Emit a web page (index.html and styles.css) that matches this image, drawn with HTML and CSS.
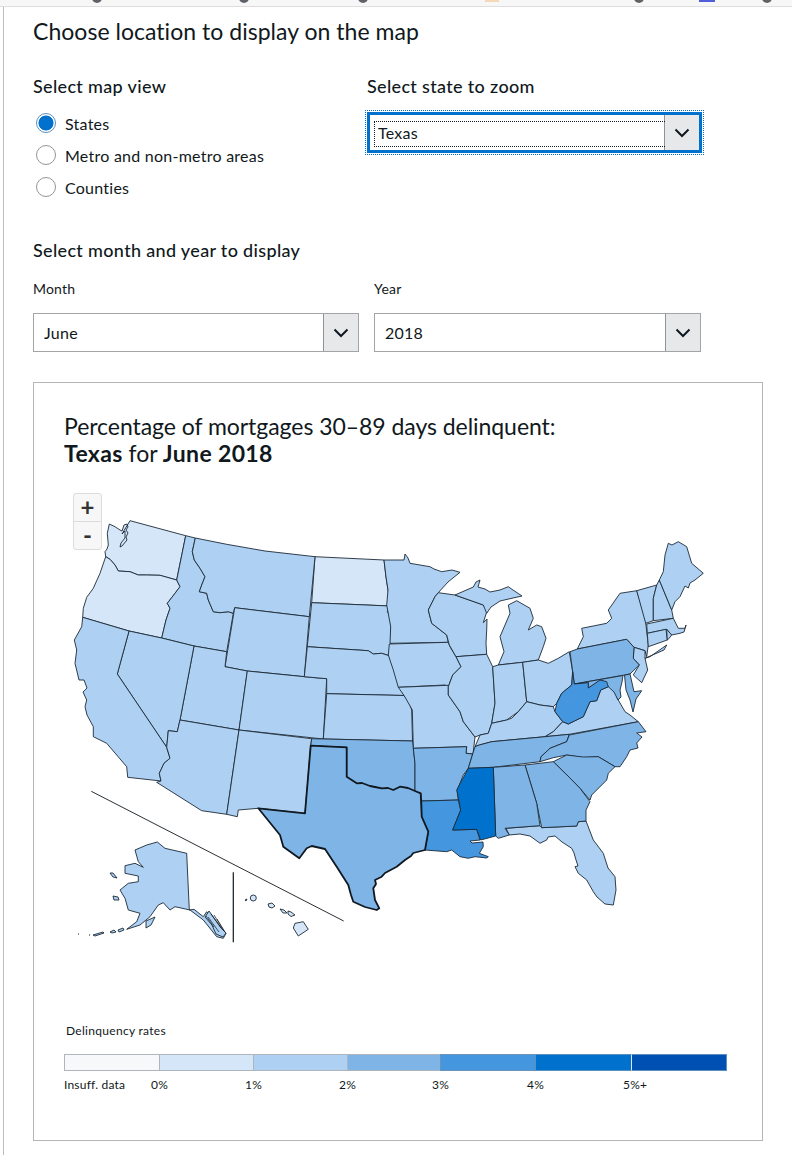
FILE: index.html
```html
<!DOCTYPE html>
<html lang="en">
<head>
<meta charset="utf-8">
<title>Mortgage delinquency map</title>
<link rel="stylesheet" href="styles.css">
</head>
<body>
<div class="topstrip">
  <svg class="topstrip-art" width="792" height="6" viewBox="0 0 792 6" aria-hidden="true">
    <circle cx="97" cy="-2" r="5" fill="#5f6368"/><circle cx="244" cy="-2" r="5" fill="#5f6368"/><circle cx="363" cy="-2" r="5" fill="#5f6368"/>
    <rect x="485" y="0" width="14" height="2" fill="#f6d8b8"/><circle cx="639" cy="-2" r="5" fill="#5f6368"/>
    <rect x="699" y="0" width="16" height="2" fill="#4f5fd8"/><circle cx="767" cy="-2" r="5" fill="#5f6368"/>
  </svg>
</div>
<main class="page">
  <h1 class="page-title">Choose location to display on the map</h1>
  <div class="two-col">
    <section class="col-view">
      <h2 class="group-title">Select map view</h2>
      <div class="radio-list">
        <label class="radio-row"><input type="radio" name="view" checked><span>States</span></label>
        <label class="radio-row"><input type="radio" name="view"><span>Metro and non-metro areas</span></label>
        <label class="radio-row"><input type="radio" name="view"><span>Counties</span></label>
      </div>
    </section>
    <section class="col-state">
      <h2 class="group-title">Select state to zoom</h2>
      <div class="select select-focused">
        <select aria-label="State"><option>Texas</option></select>
        <span class="select-arrow"><svg width="16" height="10" viewBox="0 0 16 10"><path d="M1.5 1.5 8 8l6.5-6.5" fill="none" stroke="#101820" stroke-width="2"/></svg></span>
      </div>
    </section>
  </div>
  <h2 class="group-title date-title">Select month and year to display</h2>
  <div class="date-row">
    <div class="date-field date-month">
      <label class="field-label">Month</label>
      <div class="select">
        <select aria-label="Month"><option>June</option></select>
        <span class="select-arrow"><svg width="16" height="10" viewBox="0 0 16 10"><path d="M1.5 1.5 8 8l6.5-6.5" fill="none" stroke="#101820" stroke-width="2"/></svg></span>
      </div>
    </div>
    <div class="date-field date-year">
      <label class="field-label">Year</label>
      <div class="select">
        <select aria-label="Year"><option>2018</option></select>
        <span class="select-arrow"><svg width="16" height="10" viewBox="0 0 16 10"><path d="M1.5 1.5 8 8l6.5-6.5" fill="none" stroke="#101820" stroke-width="2"/></svg></span>
      </div>
    </div>
  </div>
  <section class="card">
    <h3 class="card-title">Percentage of mortgages 30–89 days delinquent:<br><b>Texas</b> for <b>June 2018</b></h3>
    <div class="map-wrap">
      <div class="zoom-ctl"><button>+</button><button>-</button></div>
      <svg class="map" width="663" height="480" viewBox="64 480 663 480" role="img" aria-label="Map of US states">
        <g class="r1">
          <path d="M130 520.7 185.7 535.7 176.7 580 160 575.3 146.7 575 138.3 575 130 571.7 118.3 571 115 565 110 559.3 105.7 556.7 105 551.7 107 549 108.3 545 107.3 533.3 109.3 524 115 526.7 120 530 122 531 124 525 127 524 128 527 126 530 128 533 126 537 127 540 122 546 120 547 121 543 125 538 125 531 122 534 Z"/>
          <path d="M105.7 556.700 100 573.300 93.300 588.300 86.700 597.300 83.300 608.300 82.700 617.300 129 631 161.700 638 166 620 170 608.300 167.300 603.300 175 593.300 180 586.700 176.700 580 160 575.300 146.700 575 138.300 575 130 571.700 118.300 571 115 565 110 559.300 Z"/>
          <path d="M315 556.700 384 560 386 577 388 590 390 606 311.700 602.700 Z"/>
          <path d="M295 923.300 303.300 921.700 308.300 929.300 298.300 936 293.300 928 Z"/>
          <path d="M288 911 291 912 295 915 291 916.500 288 914 Z"/>
          <path d="M268 904 272 903 275 906 272 908 269 907 Z"/>
          <path d="M280 909 284 910 287 913 283 913 Z"/>
          <circle cx="253.300" cy="898" r="3"/>
          <path d="M245 900 247 899 246 901 Z"/>
        </g>
        <g class="r2">
          <path d="M185.700 535.700 195.300 538 192.300 551.700 194.300 560 200 568.300 205 576.700 201.700 585 199.300 591.700 206.700 593.300 208.300 600 213.300 611.700 220 612.700 228.300 611.700 233.300 613.300 226.700 651.700 194 646 161.700 638 166 620 170 608.300 167.300 603.300 175 593.300 180 586.700 176.700 580 Z"/>
          <path d="M195.300 538 226.700 544.300 265 551 315 556.700 309.300 616.700 234.700 607.700 233.300 613.300 228.300 611.700 220 612.700 213.300 611.700 208.300 600 206.700 593.300 199.300 591.700 201.700 585 205 576.700 200 568.300 194.300 560 192.300 551.700 Z"/>
          <path d="M234.700 607.700 309.300 616.700 304.300 676.700 247.300 671 225 666.700 Z"/>
          <path d="M194 646 226.700 651.700 225 666.700 247.300 671 239 730 180 720 Z"/>
          <path d="M247.300 671 304.300 676.700 326.700 678.700 323.300 739 239 730 Z"/>
          <path d="M129 631 161.700 638 194 646 180 720 177.300 731.700 168.300 730.700 166.700 747.300 117.300 674 Z"/>
          <path d="M82.700 617.300 129 631 117.300 674 166.700 747.300 170 758.300 164 763.300 159.300 773.300 161 781 127.700 777.300 126.700 766.700 116.700 755 106.700 743.300 93.300 736.700 93.300 726.700 87 715 85 706.700 86.700 700 83 692 87 688 84 680 79 680 75 663.300 76.700 650 74.300 640 81.700 626.700 Z"/>
          <path d="M180 720 239 730 226.700 814.300 201.700 810.700 156.700 782.300 161 781 159.300 773.300 164 763.300 170 758.300 166.700 747.300 168.300 730.700 177.300 731.700 Z"/>
          <path d="M239 730 311.700 738.700 310.700 745.700 305 813.300 258.300 808.300 238.300 810 237.300 816.700 226.700 814.300 Z"/>
          <path d="M311.700 602.700 390 606 387.300 611.700 391 616.700 391 641.700 389 655.700 381.700 653.300 373.300 654 368.300 650.700 307.300 646.700 Z"/>
          <path d="M307.300 646.700 368.300 650.700 373.300 654 381.700 653.300 389 655.700 393 662 395 670 400 685 404 695.500 326.700 693.700 326.700 678.700 304.300 676.700 Z"/>
          <path d="M326.700 693.700 404 695.500 409 702 411.700 710 412.500 741 323.300 739 Z"/>
          <path d="M384 560 404 560 405 554 408 558 410 563.300 420 565 430 566.700 434 569 441.700 571.700 452 570 460 572.300 448 582 438.300 592.700 435 596.700 428.300 610 431.700 623.300 446.700 635 448.300 642.300 390 643.300 390.700 626.700 386.700 605 388 590 386 577 Z"/>
          <path d="M389.300 644 448.300 642.300 450 646.700 456 656.700 461 666.700 452.700 675 448.300 686.700 445 685 398.300 687.300 393.300 670 388.300 655 Z"/>
          <path d="M398.300 687.300 448.300 685.300 448.300 695 460 711.700 463.300 721.700 475 737 473 754 466 753.300 466.700 746.700 413.300 748.300 412.300 710 406.700 700 404 695.500 Z"/>
          <path d="M438.300 592.700 455 595 483.300 605 487.300 610 483.300 622.700 487 619 486.700 630 486 643.300 486.700 654.300 456 656.700 449.300 645 446.700 635 431.700 623.300 428.300 610 435 596.700 Z"/>
          <path d="M455 595 473.300 587 476 582 480 580 478 587 485 589 490 592 500 590 508.300 586.700 513 590 522 596 513 598 500 601 491 607 486.700 613.300 483.300 605 Z"/>
          <path d="M498.300 665 504 651.700 500 636.700 510 613.300 508.300 605 516.700 600.700 530 608.300 533.300 618.300 528.300 630 536.700 625 541.700 626.700 546 638.300 543.300 646.700 538.300 660 522.700 662.300 Z"/>
          <path d="M456 656.700 486.700 654.300 492.700 666.700 495 703.300 491.700 723.300 488.300 733.300 480 735 475 737 463.300 721.700 460 711.700 448.300 695 448.300 686.700 452.700 675 461 666.700 Z"/>
          <path d="M492.700 666.700 498.300 665 522.700 662.300 526.700 701.700 518.300 711.700 506.700 720 491.700 723.300 495 703.300 Z"/>
          <path d="M522.700 662.300 538.300 660 548.300 663.300 558.300 658.300 569.300 651.700 572.700 671.700 571.700 685 561.700 693.300 556.700 703.300 553.300 706.700 540 705 526.700 701.700 Z"/>
          <path d="M475 746.700 480 735 488.300 733.300 491.700 723.300 506.700 720 512 718 518.300 711.700 526.700 701.700 540 705 553.300 706.700 555 711.700 562.700 721.700 553.300 731.700 545 736.700 491.700 741.700 479.300 745 Z"/>
          <path d="M553.300 731.700 562.700 721.700 568.300 724 583.300 716.700 590 701.700 596.700 700.700 600.700 690 608.300 686.700 615 688 617.300 698.300 625 711.700 630 715 638.300 721.700 569.300 734.300 545 736.700 Z"/>
          <path d="M577.300 649 583.300 636.700 581.700 628.300 606.700 623.300 611.700 618.300 608.300 610 620 593.300 636.700 590.700 645 616.700 648.300 645 646.700 656.700 645 650.700 634 647.300 626.700 639.300 Z"/>
          <path d="M650 656.700 666.700 645 664 650 645 658.300 Z"/>
          <path d="M636.700 590.700 656.700 585 653.300 598.300 653.300 620.700 645.700 623.300 Z"/>
          <path d="M656.700 585 659.300 580 671.700 610 673.300 618.300 653.300 620.700 653.300 598.300 Z"/>
          <path d="M659.300 580 663.300 571.700 665 555 668.300 543.300 672 545 678.300 541.700 686.700 546.700 691.700 563.300 703.300 573.300 695 580 690 583 688.300 588 685 586 680 596.700 675 601.700 671.700 610 Z"/>
          <path d="M646.700 624 673.300 618.300 678.300 628.300 685 628.300 686 625 684 632 680 633.300 671.700 635 666.700 629.300 647.300 633.300 Z"/>
          <path d="M647.300 633.300 666 629.300 667.300 640 648.300 646.700 Z"/>
          <path d="M666.700 629.300 671.700 635 668.300 639.300 667.300 640 Z"/>
          <path d="M634 647.300 645 650.700 645 658.300 647.700 670 641.700 682.700 633.300 675 639.300 665 633.300 658.300 Z"/>
          <path d="M506 828.300 540 825.700 541.700 827.700 576.700 826 578.300 821.700 586 821 593.300 840 603.300 853.300 608 868 615 876.700 616 890 613.300 905 605 904 597 897 593.300 891.700 586.700 880 578.300 873.300 575 866.700 578 866 576 860 574 853 571.700 848.300 562 842 555 836 548 837 546.700 840 540 843.300 530 836 520 834 509.300 835 Z"/>
          <path d="M135 850 146.700 845 157.300 842 165 848.300 186.700 853.300 189.300 910 194 909.300 203.300 916.700 206.700 911.700 216.700 923.300 226 933.300 223.300 938.300 216.700 936.700 203.300 920 190 910 175 906.700 170 910 163.300 902.700 158.300 905 150 916.700 140 925 126.700 929.300 136.700 921.700 140 913.300 128.300 910 125 898.300 120 890 128.300 883.300 138.300 881.700 138.300 876 125 873.300 125 865.700 135 863.300 143.300 867.300 138.300 861.700 Z"/>
          <path d="M209 911 222 929 226 933 223 937 216 934 212 925 205 917 Z"/>
          <path d="M110 873 113 873 117 878 113 877 Z"/>
          <path d="M113 896 118 897 119 900 114 900 Z"/>
          <path d="M146 921 155 917 151 925 146 928 Z"/>
          <path d="M110 932 114 930 116 932 112 933 Z"/>
          <path d="M118 930 123 928 124 930 119 932 Z"/>
          <path d="M93 935 103 932 104 933 95 936 Z"/>
        </g>
        <g class="r3">
          <path d="M311.700 738.700 412.500 741 413.300 748.300 415 763.300 415 793.300 400 786.700 393.300 790 381.700 788.300 370 786 356.700 783.300 346.700 776.700 346.700 747.300 310.700 745.700 Z"/>
          <path d="M413.300 748.300 466.700 746.700 466 753.300 472.700 754 468.300 768.300 463.300 775 457.300 790 458.300 800 421.700 801 420.700 793.300 415 793.300 415 763.300 Z"/>
          <path d="M475 746.700 479.300 745 491.700 741.700 545 736.700 569.300 734.300 566.700 741.700 550 748.300 541 756.700 540 761.700 493.300 767.300 468.300 768.300 472.700 754 Z"/>
          <path d="M569.300 735 638.300 721.700 646 731.700 636.700 733 642 737 636.700 743 638 748 630 750 626.700 756.700 620 766.700 615 766.700 598.300 756.700 583.300 757.700 566.700 755 553.300 757.700 540 761.700 541 756.700 550 748.300 566.700 741.700 Z"/>
          <path d="M553.300 761.700 566.700 755 583.300 757 598.300 756.700 615 766.700 608.300 773.300 606.700 780 591.700 795 590 800 580 788.300 570 778 Z"/>
          <path d="M525 765 553.300 761.700 570 778 580 788.300 590 801.700 586 810 586 821 578.300 821.700 576.700 826 541.700 827.700 536.700 803.300 Z"/>
          <path d="M493.300 767.300 525 765 536.700 803.300 540 825.700 505 828.300 509.300 835 498.300 838.300 495.700 836 Z"/>
          <path d="M577.300 649 626.700 639.300 634 647.300 633.300 658.300 639.300 665 630 674 574.300 684 570 651.700 Z"/>
          <path d="M574.300 684 623 675.500 622 682 620 690 621 697 618 700 614 692 608.300 686.700 601.700 680 588.300 688 588.300 682.700 Z"/>
          <path d="M624.500 675.200 630 674 634 691.700 641.700 690.700 636 699 633 712 630 700 626 690 Z"/>
        </g>
        <g class="r4">
          <path d="M572.700 671.700 574.300 684 588.300 682.700 588.300 688 600 680 606.700 681.700 608.300 686.700 600.700 690 596.700 700.700 590 701.700 583.300 716.700 568.300 724 562.700 721.700 555 711.700 556.700 703.300 561.700 693.300 571.700 685 Z"/>
          <path d="M421.700 801 458.300 800 460.700 810 452.700 830 476.700 829.300 480 840 470 841 472 843 483 842 483.300 846.700 479.300 853.300 488.300 856.700 486.700 858 475 856.700 468.300 858.300 460 856.700 451.700 850 446.700 851.700 425 850 428.300 831.700 421.700 816.700 Z"/>
        </g>
        <g class="r5">
          <path d="M468.300 768.300 493.300 767.300 495.700 836 480.700 840 476.700 829.300 452.700 830 460.700 810 456.700 790 Z"/>
        </g>
        <g class="r3 selected">
          <path d="M310.700 745.700 346.700 747.300 346.700 776.700 356.700 783.300 362 783 370 786 375 787 381.700 788.300 388 788 393.300 790 400 786.700 408 788 415 791 420.700 793.300 421.700 816.700 428.300 831.700 425 850 413.300 853 411 856 405 860 396.700 866.700 385 873 381.700 876.700 375 880 376 884 373.300 888.300 375 900 379.300 908.300 376.700 910 365 907 353.300 901.700 351 895 348.300 885 336.700 866.700 325 849 311.700 846 306.700 848.300 299.300 858.300 283.300 846.700 280 835 258.300 808.300 305 813.300 Z"/>
        </g>
        <path class="rule" d="M91.300 791.300 343.700 921"/>
        <path class="rule rule-strong" d="M233.300 872.300V942.300"/>
        <path class="rule fine" d="M211 914 221 928M214 915 224 931M208 917 219 932M217 919 225 932M206 916 214 927"/>
        <path class="rule rule-strong" d="M78 934h1M89 935h1"/>
      </svg>
    </div>
    <div class="legend-title">Delinquency rates</div>
    <div class="legend-bar">
      <span class="seg seg0"></span><span class="seg seg1"></span><span class="seg seg2"></span><span class="seg seg3"></span><span class="seg seg4"></span><span class="seg seg5"></span><span class="seg seg6"></span>
    </div>
    <div class="legend-labels">
      <span class="first">Insuff. data</span><span>0%</span><span>1%</span><span>2%</span><span>3%</span><span>4%</span><span>5%+</span>
    </div>
  </section>
</main>
</body>
</html>
```
FILE: styles.css
```css
* { box-sizing: border-box; }
html, body { margin: 0; padding: 0; background: #fff; }
body { font-family: Lato, "Open Sans", "Liberation Sans", sans-serif; color: #101820; width: 792px; overflow-x: hidden; }

.topstrip { height: 7px; background: #f7f7f7; border-bottom: 1px solid #dedede; }
.topstrip-art { display: block; }

.page { margin-left: 3px; padding: 0 0 14px 29px; border-left: 1px solid #bdbdbd; }
.page-title { margin: 0; padding-top: 10px; font-size: 23px; line-height: 28px; font-weight: 400; letter-spacing: .03px; }

.two-col { display: flex; margin-top: 29px; }
.col-view { width: 334px; flex: none; }
.col-state { width: 335px; flex: none; }
.group-title { margin: 0; font-size: 18px; line-height: 24px; font-weight: 500; letter-spacing: .33px; }

.radio-list { display: flex; flex-direction: column; margin-top: 9px; }
.radio-row { display: flex; align-items: center; height: 32px; gap: 9px; padding-left: 3px; font-size: 16px; letter-spacing: .25px; }
.radio-row input { appearance: none; -webkit-appearance: none; margin: 0; width: 20px; height: 20px; border-radius: 50%; border: 1px solid #919395; background: #fff; flex: none; }
.radio-row input:checked { background: radial-gradient(circle, #0072ce 0, #0072ce 7.2px, #fff 7.8px); border-color: #5b8fbe; }

.select { position: relative; height: 39px; }
.select select { appearance: none; -webkit-appearance: none; display: block; width: 100%; height: 100%; border: 1px solid #a2a4a6; border-radius: 0; background: #fff; padding: 0 36px 0 10px; font: 400 16px/20px Lato, "Open Sans", sans-serif; letter-spacing: .25px; color: #101820; }
.select-arrow { position: absolute; top: 1px; right: 1px; bottom: 1px; width: 35px; display: flex; align-items: center; justify-content: center; background: #e7e8e9; border-left: 1px solid #919395; }

.select-focused { height: 41px; margin-top: 14px; outline: 1px dotted #0072ce; outline-offset: 1px; width: 335px; }
.select-focused select { border: 3px solid #0072ce; padding-left: 8px; }
.select-focused .select-arrow { top: 3px; right: 3px; bottom: 3px; width: 35px; }
.select-focused::after { content: ""; position: absolute; left: 7px; top: 9px; right: 37px; height: 24px; border: 1px dotted #101820; border-right: 0; pointer-events: none; }

.date-title { margin-top: 35px; }
.date-row { display: flex; gap: 15px; margin-top: 17px; }
.date-month { width: 326px; }
.date-year { width: 327px; }
.field-label { display: block; font-size: 14px; line-height: 20px; margin-bottom: 14px; letter-spacing: .2px; }

.card { width: 730px; margin-top: 30px; padding: 30px 35px 47px 30px; border: 1px solid #b4b5b6; }
.card-title { margin: 0; font-size: 23px; line-height: 27px; font-weight: 400; letter-spacing: -.05px; }
.card-title b { font-weight: 700; letter-spacing: .35px; }

.map-wrap { position: relative; margin-top: 13px; height: 480px; }
.map { display: block; }
.map path, .map circle { stroke: #1c2a38; stroke-width: .9; stroke-linejoin: round; }
.r1 * { fill: #d5e6f9; }
.r2 * { fill: #aed0f2; }
.r3 * { fill: #7fb4e6; }
.r4 * { fill: #4496de; }
.r5 * { fill: #0072ce; }
.selected path { stroke: #101820; stroke-width: 1.8; }
.map .rule { fill: none; stroke: #101820; stroke-width: .9; }
.map .rule-strong { stroke-width: 1.2; }
.map .fine { stroke-width: .7; }

.zoom-ctl { position: absolute; left: 9px; top: 13px; width: 29px; height: 57px; display: flex; flex-direction: column; background: #f7f7f7; border: 1px solid #dcdcdc; border-radius: 3px; }
.zoom-ctl button { flex: 1; margin: 0; padding: 0 0 2px; border: 0; background: none; font: 700 24px/1 Lato, sans-serif; color: #333; }
.zoom-ctl button + button { border-top: 1px solid #dcdcdc; }

.legend-title { margin-top: 63px; padding-left: 2px; font-size: 12px; line-height: 16px; letter-spacing: .3px; }
.legend-bar { display: grid; grid-template-columns: 95px 94px 94px 93px 95px 96px 96px; width: 663px; height: 17px; margin-top: 15px; }
.seg { border: 1px solid #aeb5bc; border-right-width: 0; }
.seg0 { background: #f7f8f9; }
.seg1 { background: #d5e6f9; }
.seg2 { background: #aed0f2; }
.seg3 { background: #7fb4e6; }
.seg4 { background: #4496de; border-color: #6b93b8; }
.seg5 { background: #0072ce; border-color: #5b8fbe; }
.seg6 { background: #0050b4; border-color: #5b8fbe; border-left-color: #dfe6ee; border-right-width: 1px; }
.legend-labels { display: grid; grid-template-columns: 95px 94px 94px 93px 95px 96px 96px; width: 663px; margin-top: 6px; font-size: 12px; line-height: 16px; letter-spacing: .2px; }
.legend-labels span { margin-left: -8px; }
.legend-labels .first { margin-left: 0; }
```
